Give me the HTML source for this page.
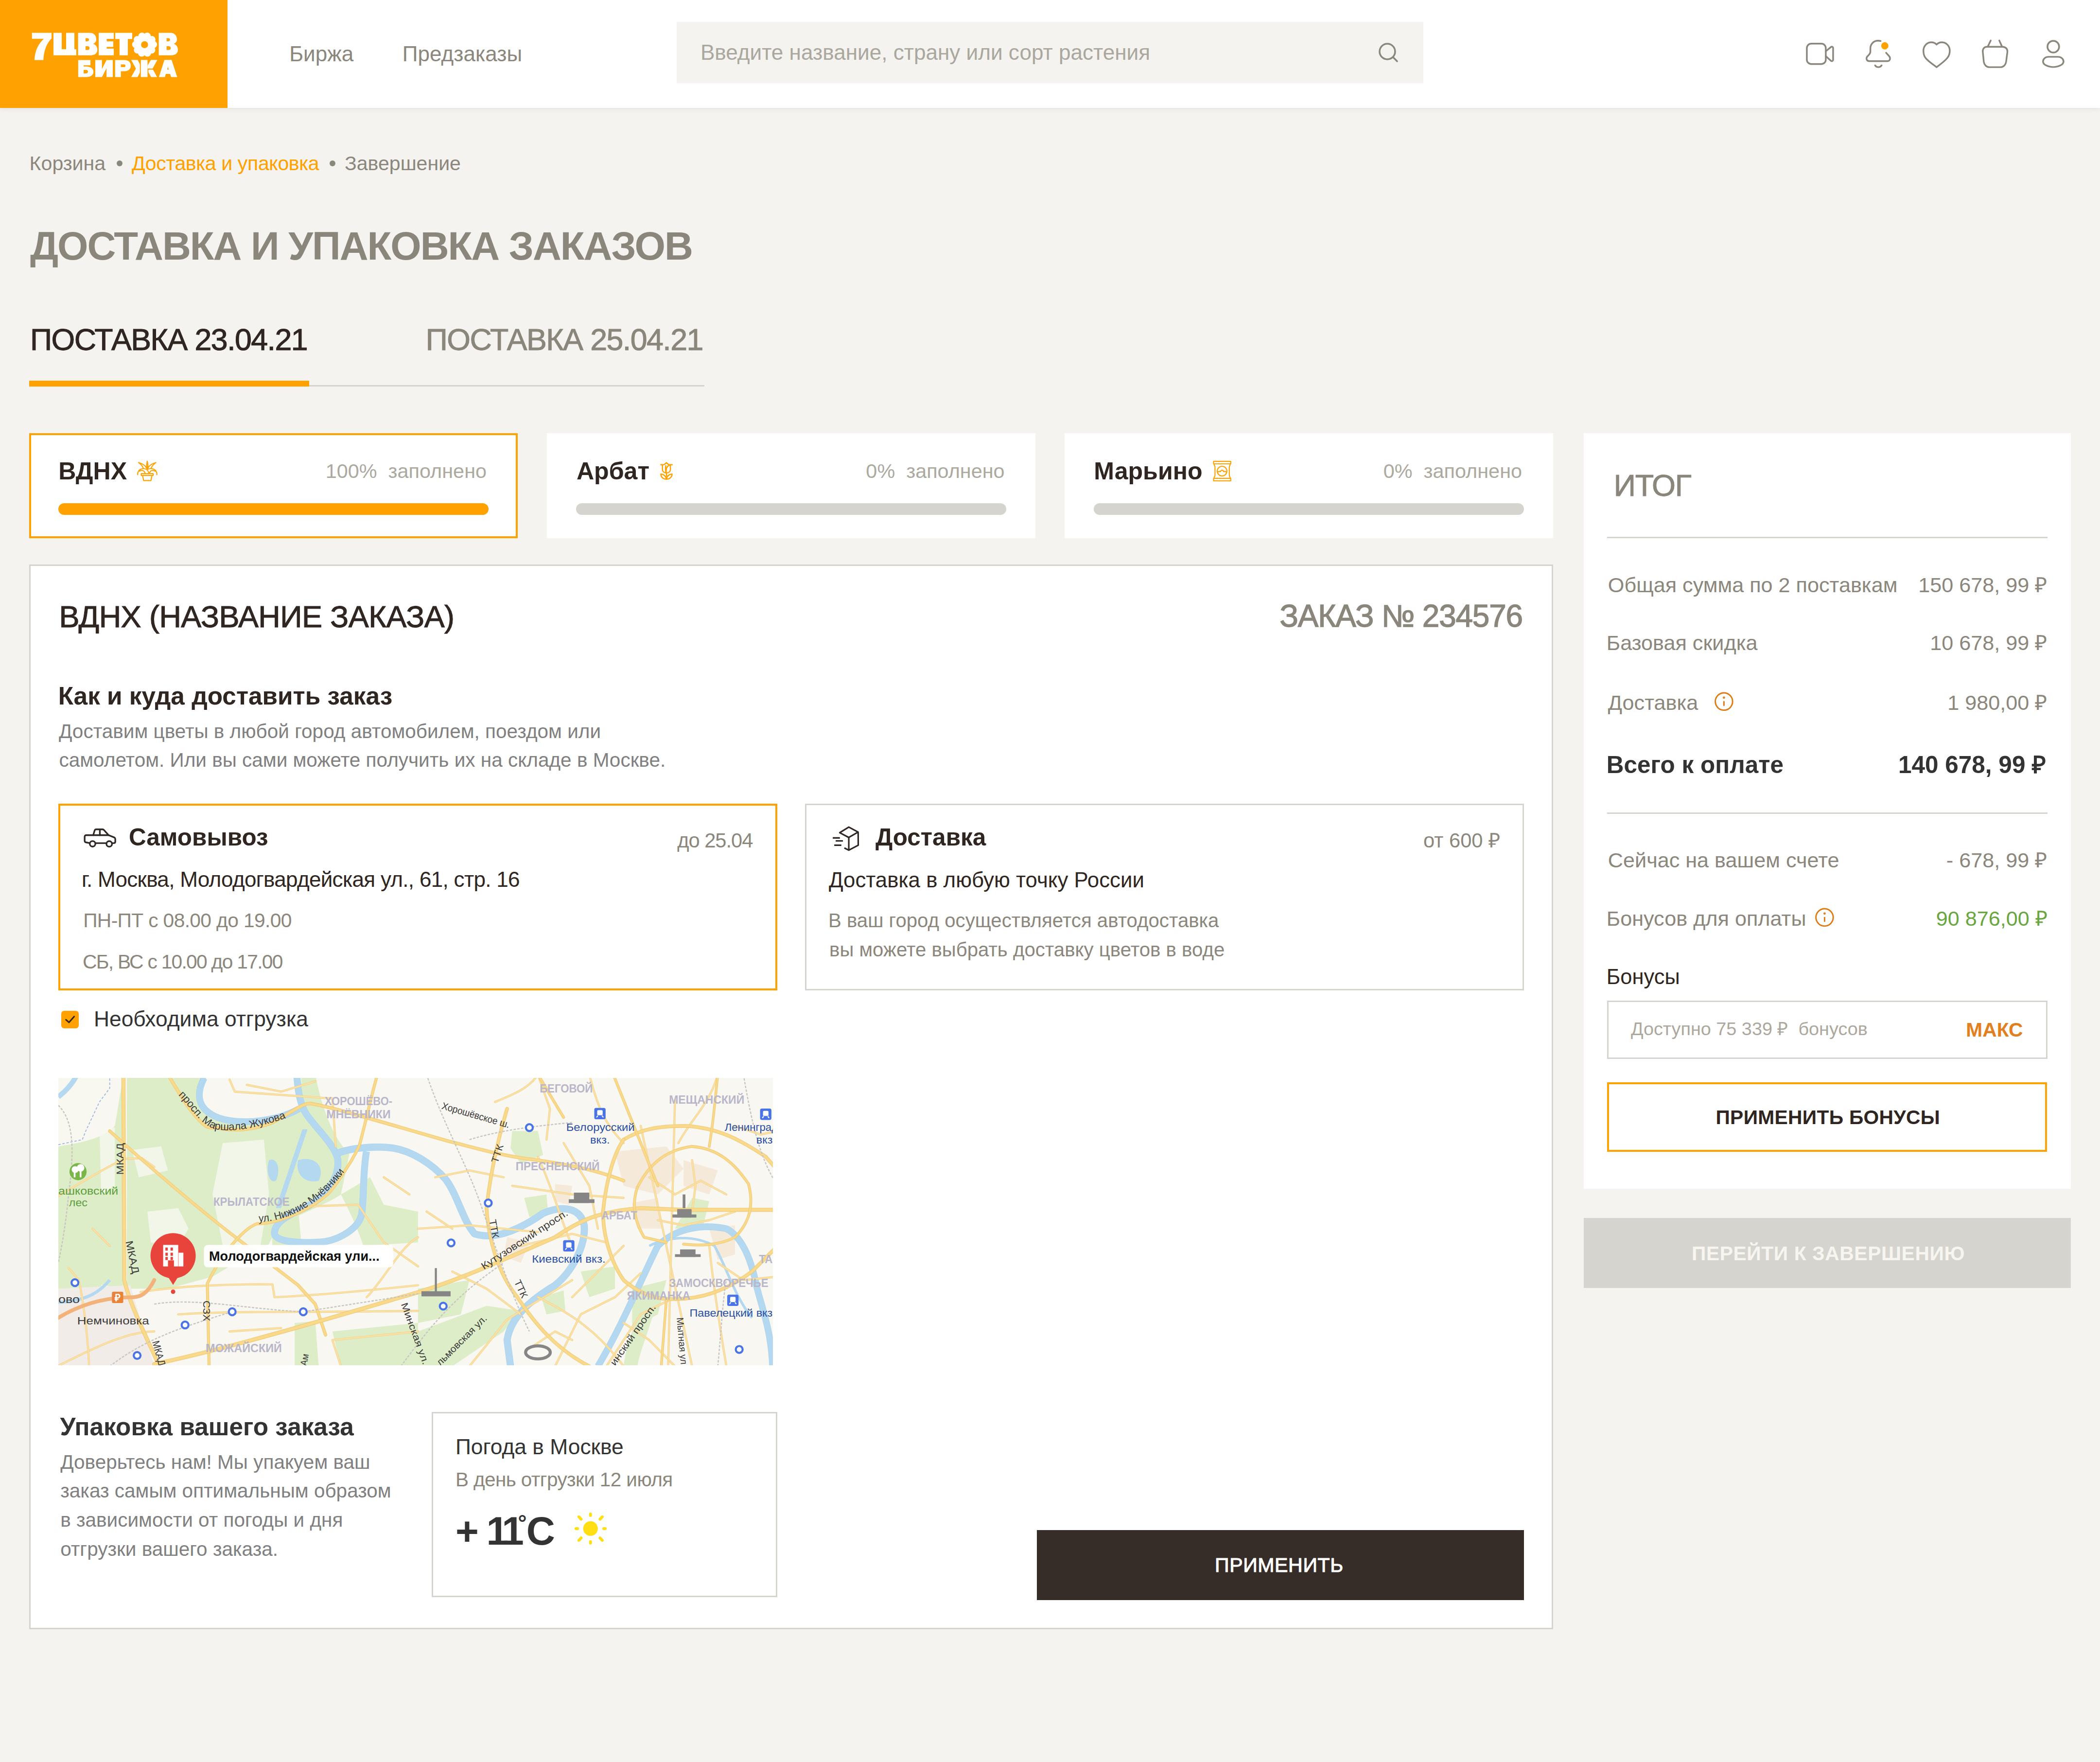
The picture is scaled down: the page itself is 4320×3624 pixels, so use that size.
<!DOCTYPE html>
<html lang="ru">
<head>
<meta charset="utf-8">
<style>
html,body{margin:0;padding:0;width:4320px;height:3624px;overflow:hidden;background:#F4F3EF;}
#pg{position:relative;width:1440px;height:1208px;zoom:3;background:#F4F3EF;font-family:"Liberation Sans",sans-serif;color:#2F2622;overflow:hidden;}
.a{position:absolute;white-space:nowrap;line-height:1;}
@media (max-width:3000px){html,body{width:1440px;height:1208px;} #pg{zoom:1;}}
</style>
</head>
<body>
<div id="pg">

<div class="a" style="left:0;top:0;width:1440px;height:74px;background:#fff;box-shadow:0 1px 3px rgba(120,110,90,0.10);"></div>
<div class="a" style="left:0;top:0;width:156px;height:74px;background:#FFA100;"></div>
<div class="a" style="left:464px;top:15px;width:512px;height:42px;background:#F4F3EF;"></div>
<div class="a" style="left:80px;top:110px;width:4px;height:4px;border-radius:50%;background:#8B877D;"></div>
<div class="a" style="left:226px;top:110px;width:4px;height:4px;border-radius:50%;background:#8B877D;"></div>
<div class="a" style="left:20px;top:264px;width:463px;height:1px;background:#D5D3CE;"></div>
<div class="a" style="left:20px;top:261px;width:192px;height:4px;background:#FFA100;"></div>
<div class="a" style="left:20px;top:297px;width:332.32px;height:69.32px;background:#fff;border:1.34px solid #FFA100;"></div>
<div class="a" style="left:40px;top:345px;width:295px;height:8px;border-radius:4px;background:#FFA100;"></div>
<div class="a" style="left:375px;top:297px;width:335px;height:72px;background:#fff;"></div>
<div class="a" style="left:395px;top:345px;width:295px;height:8px;border-radius:4px;background:#D6D4CF;"></div>
<div class="a" style="left:730px;top:297px;width:335px;height:72px;background:#fff;"></div>
<div class="a" style="left:750px;top:345px;width:295px;height:8px;border-radius:4px;background:#D6D4CF;"></div>
<div class="a" style="left:20px;top:387px;width:1043px;height:728px;background:#fff;border:1px solid #D6D4CF;"></div>
<div class="a" style="left:40px;top:551px;width:490.32px;height:125.32px;border:1.34px solid #FFA100;"></div>
<div class="a" style="left:552px;top:551px;width:491px;height:126px;border:1px solid #D6D4CF;"></div>
<div class="a" style="left:42px;top:693px;width:12px;height:12px;border-radius:2px;background:#FFA100;"></div>
<div class="a" style="left:296px;top:968px;width:235px;height:125px;border:1px solid #D6D4CF;"></div>
<div class="a" style="left:711px;top:1049px;width:334px;height:48px;background:#372D28;"></div>
<div class="a" style="left:1086px;top:297px;width:334px;height:518px;background:#fff;"></div>
<div class="a" style="left:1102px;top:368px;width:302px;height:1px;background:#D6D4CF;"></div>
<div class="a" style="left:1102px;top:557px;width:302px;height:1px;background:#D6D4CF;"></div>
<div class="a" style="left:1102px;top:686px;width:300px;height:38px;border:1px solid #D6D4CF;"></div>
<div class="a" style="left:1102px;top:742px;width:299px;height:45px;border:1.5px solid #FFA100;"></div>
<div class="a" style="left:1086px;top:835px;width:334px;height:48px;background:#D6D4CF;"></div>

<svg class="a" style="left:13.333px;top:13.333px;width:120px;height:46.667px" viewBox="0 0 2100 817"><g fill="#fff" fill-rule="evenodd">
<path d="M150,161 L385,161 L385,228 C322,292 292,380 287,487 L180,487 C185,375 225,295 292,232 L150,232 Z"/>
<path d="M408,161 L507,161 L507,358 L560,358 L560,161 L659,161 L659,358 L682,358 L682,430 L408,430 Z"/>
<path d="M704,161 L845,161 C895,161 922,195 922,240 C922,265 905,285 883,292 C915,300 935,330 935,365 C935,405 905,430 855,430 L704,430 Z M793,225 L793,262 L815,262 C828,262 834,255 834,244 C834,232 828,225 815,225 Z M793,321 L793,366 L818,366 C833,366 841,357 841,344 C841,330 833,321 818,321 Z"/>
<path d="M951,161 L1132,161 L1132,233 L1047,233 L1047,262 L1126,262 L1126,329 L1047,329 L1047,350 L1132,350 L1132,430 L951,430 Z"/>
<path d="M1150,161 L1353,161 L1353,235 L1301,235 L1301,430 L1201,430 L1201,235 L1150,235 Z"/>
<path d="M1672,161 L1812,161 C1862,161 1890,195 1890,240 C1890,265 1873,285 1851,292 C1883,300 1902,330 1902,365 C1902,405 1872,430 1822,430 L1672,430 Z M1766,225 L1766,262 L1788,262 C1801,262 1807,255 1807,244 C1807,232 1801,225 1788,225 Z M1766,321 L1766,366 L1791,366 C1806,366 1816,357 1816,344 C1816,330 1806,321 1791,321 Z"/>
<circle cx="1501.8" cy="302.5" r="112"/><circle cx="1470.8" cy="201.1" r="44"/><circle cx="1532.8" cy="201.1" r="44"/><circle cx="1588.6" cy="241.7" r="44"/><circle cx="1607.8" cy="300.7" r="44"/><circle cx="1586.5" cy="366.3" r="44"/><circle cx="1536.3" cy="402.7" r="44"/><circle cx="1467.3" cy="402.7" r="44"/><circle cx="1417.1" cy="366.3" r="44"/><circle cx="1395.8" cy="300.7" r="44"/><circle cx="1415.0" cy="241.7" r="44"/>
<path d="M705,487 L852,487 L852,550 L770,550 L770,565 L800,565 C860,565 888,595 888,628 C888,665 860,692 800,692 L705,692 Z M770,605 L770,648 L800,648 C815,648 822,637 822,626 C822,615 815,605 800,605 Z"/>
<path d="M910,487 L990,487 L990,595 L1045,487 L1120,487 L1120,692 L1045,692 L1045,585 L990,692 L910,692 Z"/>
<path d="M1148,487 L1262,487 C1312,487 1337,520 1337,553 C1337,590 1312,622 1262,622 L1217,622 L1217,692 L1148,692 Z M1217,540 L1217,572 L1257,572 C1267,572 1272,564 1272,556 C1272,548 1267,540 1257,540 Z"/>
<path d="M1341,486 L1418,486 L1445,535 L1445,639 L1418,691 L1341,691 L1398,590 Z"/>
<path d="M1457,486 L1537,486 L1537,691 L1457,691 Z"/>
<path d="M1537,554 L1577,486 L1655,486 L1598,589 L1537,589 Z"/>
<path d="M1548,602 L1603,602 L1652,691 L1580,691 L1548,633 Z"/>
<path d="M1674,691 L1740,486 L1826,486 L1894,691 L1821,691 L1807,654 L1757,654 L1746,691 Z M1772,601 L1792,601 L1782,569 Z"/>
</g><circle cx="1501.8" cy="302.5" r="42" fill="#FFA100"/></svg>
<svg class="a" style="left:1233.333px;top:23.333px;width:66.667px;height:26.667px" viewBox="0 0 2100 840" fill="none" stroke="#8A867C" stroke-width="36" stroke-linecap="round" stroke-linejoin="round">
<rect x="178" y="208" width="409" height="440" rx="95"/>
<path d="M590,370 L700,280 C720,265 745,280 745,300 L745,560 C745,580 720,595 700,580 L590,480"/>
<path d="M1772,150 C1745,143 1722,143 1700,145 C1612,152 1550,222 1550,310 L1550,380 C1550,410 1537,430 1517,450 L1490,477 C1472,495 1465,515 1467,537 C1472,567 1497,585 1530,585 L1918,585 C1952,585 1975,562 1975,530 C1975,505 1965,485 1945,465 L1890,405"/>
<path d="M1652,677 C1670,703 1695,715 1722,715 C1750,715 1775,703 1793,677"/>
<circle cx="1862" cy="255" r="78" fill="#FFA100" stroke="none"/>
</svg>
<svg class="a" style="left:1313.333px;top:23.333px;width:66.667px;height:26.667px" viewBox="0 0 2100 840" fill="none" stroke="#8A867C" stroke-width="36" stroke-linecap="round" stroke-linejoin="round">
<path d="M460,715 C380,655 285,590 225,520 C185,472 176,425 176,362 C176,255 255,178 350,178 C398,178 432,198 460,225 C488,198 522,178 570,178 C668,178 745,255 745,362 C745,425 730,472 690,520 C632,590 540,655 460,715 Z" stroke-linejoin="miter"/>
<path d="M1545,275 L1885,275 C1950,275 1997,325 1990,385 L1962,600 C1952,665 1905,715 1840,715 L1600,715 C1535,715 1490,665 1480,600 L1458,385 C1450,325 1492,275 1545,275 Z"/>
<path d="M1570,262 L1630,140 M1870,262 L1815,140"/>
</svg>
<svg class="a" style="left:1393.333px;top:23.333px;width:33.333px;height:26.667px" viewBox="0 0 2100 1680" fill="none" stroke="#8A867C" stroke-width="72" stroke-linecap="round" stroke-linejoin="round">
<circle cx="922" cy="545" r="252"/>
<path d="M720,985 L1120,985 C1262,985 1365,1080 1365,1185 C1365,1322 1150,1425 920,1425 C690,1425 478,1322 478,1185 C478,1080 580,985 720,985 Z"/>
</svg>
<svg class="a" style="left:940px;top:23.333px;width:26.667px;height:23.333px" viewBox="0 0 2014 1762" fill="none" stroke="#8A867C" stroke-width="88" stroke-linecap="round">
<circle cx="855" cy="905" r="402"/><path d="M1160,1210 L1360,1412"/>
</svg>
  <!-- location icons -->
  <svg class="a" style="left:90px;top:310px;width:23.333px;height:23.333px" viewBox="0 0 1762 1762" fill="none" stroke="#FFA100" stroke-width="55" stroke-linecap="round" stroke-linejoin="round">
   <rect x="515" y="1110" width="620" height="95" rx="10"/>
   <path d="M590,1215 L640,1470 L1020,1470 L1070,1215"/>
   <path d="M830,470 C790,620 775,740 830,860 C885,740 870,620 830,470 Z"/>
   <path d="M380,540 C600,590 740,700 820,860 M380,540 C520,640 590,740 625,830"/>
   <path d="M1275,540 C1055,590 915,700 840,860 M1275,540 C1135,640 1065,740 1030,830"/>
   <path d="M335,1170 C315,960 470,850 640,850 C760,850 870,930 910,1070 M420,985 C520,920 680,930 710,1080"/>
   <path d="M1325,1170 C1345,960 1190,850 1020,850 C900,850 860,880 850,900 M1240,985 C1140,920 980,930 950,1080"/>
  </svg>
  <svg class="a" style="left:446.667px;top:310px;width:20px;height:23.333px" viewBox="0 0 1510 1762" fill="none" stroke="#FFA100" stroke-width="62" stroke-linecap="round" stroke-linejoin="round">
   <path d="M485,650 L640,650 M915,650 L1075,650"/>
   <path d="M680,630 L778,545 L875,630"/>
   <path d="M572,660 L572,900 C572,1000 652,1070 778,1075 C902,1070 985,1000 985,900 L985,660"/>
   <path d="M745,700 C715,790 735,900 745,1030 M765,1030 C755,830 815,720 925,680"/>
   <path d="M778,1075 L790,1250"/>
   <path d="M490,1135 C485,1290 620,1395 778,1400 C765,1250 650,1145 490,1135 Z"/>
   <path d="M1070,1135 C1075,1290 940,1395 782,1400 C795,1250 910,1145 1070,1135 Z"/>
  </svg>
  <svg class="a" style="left:826.667px;top:310px;width:23.333px;height:23.333px" viewBox="0 0 1762 1762" fill="none" stroke="#FFA100" stroke-width="55" stroke-linecap="round" stroke-linejoin="round">
   <rect x="415" y="475" width="890" height="130" rx="8"/>
   <rect x="415" y="1355" width="890" height="130" rx="8"/>
   <path d="M440,610 C440,680 490,700 490,770 L490,1190 C490,1260 440,1280 440,1350"/>
   <path d="M1280,610 C1280,680 1230,700 1230,770 L1230,1190 C1230,1260 1280,1280 1280,1350"/>
   <circle cx="855" cy="980" r="250"/>
   <path d="M630,1030 C680,995 730,990 770,1010 C795,955 830,935 855,935 C890,935 920,960 940,1010 C985,990 1030,995 1080,1030"/>
  </svg>

  <!-- car / box -->
  <svg class="a" style="left:53.333px;top:563.333px;width:30px;height:23.333px" viewBox="0 0 2100 1633" fill="none" stroke="#2F2723" stroke-width="78" stroke-linecap="round" stroke-linejoin="round">
   <path d="M555,1022 L390,992 C352,982 330,952 330,915 L330,722 C330,680 360,648 402,648 L1482,648 L1762,762 C1790,780 1800,805 1800,842 L1800,962 C1800,1002 1772,1030 1722,1030 L1668,1030"/>
   <path d="M868,1030 L1340,1030"/>
   <circle cx="710" cy="1062" r="133"/><circle cx="1510" cy="1067" r="133"/>
   <path d="M742,648 L810,422 C822,390 850,367 882,367 L1195,367 C1220,367 1238,378 1250,395 L1482,648"/>
   <path d="M1060,367 L1060,648"/>
  </svg>
  <svg class="a" style="left:566.667px;top:563.333px;width:26.667px;height:23.333px" viewBox="0 0 2014 1762" fill="none" stroke="#2F2723" stroke-width="80" stroke-linejoin="round">
   <path d="M1160,278 L690,570 L1160,818 L1642,540 Z"/>
   <path d="M1160,818 L1160,1478"/>
   <path d="M1645,540 L1650,1220 L1160,1478 L930,1360"/>
   <path d="M330,842 L700,842 M482,995 L855,995 M407,1218 L775,1218"/>
  </svg>

  <!-- checkbox tick -->
  <svg class="a" style="left:36.667px;top:688.333px;width:23.333px;height:20px" viewBox="0 0 2056 1762" fill="none" stroke="#2F2723" stroke-width="88" stroke-linecap="round" stroke-linejoin="round">
   <path d="M755,950 L940,1110 L1250,755"/>
  </svg>

  <!-- info icons -->
  <svg class="a" style="left:1173.333px;top:470px;width:16.667px;height:20px" viewBox="0 0 1468 1762" fill="none" stroke="#E07A14" stroke-width="86" stroke-linecap="round">
   <circle cx="775" cy="965" r="522"/><path d="M775,978 L775,1200"/><circle cx="775" cy="730" r="30" stroke-width="80"/>
  </svg>
  <svg class="a" style="left:1242.333px;top:617.93px;width:16.667px;height:20px" viewBox="0 0 1468 1762" fill="none" stroke="#E07A14" stroke-width="86" stroke-linecap="round">
   <circle cx="775" cy="965" r="522"/><path d="M775,978 L775,1200"/><circle cx="775" cy="730" r="30" stroke-width="80"/>
  </svg>

  <!-- sun -->
  <svg class="a" style="left:386.667px;top:1030px;width:33.333px;height:33.333px" viewBox="0 0 1762 1762" fill="#FFDF14" stroke="#FFDF14" stroke-width="105" stroke-linecap="round">
   <circle cx="965" cy="950" r="265" stroke="none"/>
   <path d="M965,422 L965,478 M965,1422 L965,1478 M440,950 L495,950 M1445,950 L1500,950 M545,525 L625,610 M1390,525 L1310,610 M545,1375 L625,1290 M1390,1375 L1310,1290"/>
  </svg>


<svg class="a" style="left:40px;top:739px;width:490px;height:197px" viewBox="120 2217 1470 591" preserveAspectRatio="none">
<rect x="120" y="2217" width="1470" height="591" fill="#F8F7F1"/>
<g transform="translate(120,2210) scale(0.35236)">
<path d="M0,420 C120,400 250,380 330,300 L380,0 L380,1250 C250,1230 120,1200 0,1180 Z" fill="#DCEDC8"/>
<path d="M400,0 L860,0 C830,120 820,200 930,260 C1100,310 1300,280 1410,200 L1420,0 L1500,0 C1560,300 1650,420 1700,460 L1650,700 C1560,760 1400,820 1280,880 L1230,990 C1100,1060 1000,1120 900,1180 L640,1250 L400,1250 Z" fill="#DCEDC8"/>
<path d="M1650,700 C1700,800 1750,900 1780,1000 L2100,980 L2100,800 L1900,760 L1820,600 Z" fill="#DCEDC8"/>
<path d="M1240,800 L1400,780 L1420,1000 L1250,1000 Z" fill="#DCEDC8"/>
<path d="M1380,1450 L1500,1440 L1520,1703 L1380,1703 Z" fill="#DCEDC8"/>
<path d="M1600,1500 L2100,1450 L2100,1703 L1650,1703 Z" fill="#DCEDC8"/>
<path d="M0,1100 L200,1120 L260,1250 L0,1250 Z" fill="#DCEDC8"/>
<path d="M2650,330 L2800,330 L2830,470 L2700,520 L2640,430 Z" fill="#DCEDC8"/>
<path d="M2720,720 L2850,700 L2860,820 L2750,830 Z" fill="#DCEDC8"/>
<path d="M2100,1250 L2400,1200 L2350,1400 L2100,1450 Z" fill="#DCEDC8"/>
<path d="M2100,1500 L2500,1350 L2700,1380 L2600,1500 L2300,1703 L2100,1703 Z" fill="#DCEDC8"/>
<path d="M3050,1150 L3250,1120 L3250,1250 L3100,1300 Z" fill="#DCEDC8"/>
<path d="M3350,1250 L3550,1200 L3500,1400 L3350,1480 Z" fill="#DCEDC8"/>
<path d="M3600,900 L3700,720 L3800,740 L3760,900 Z" fill="#DCEDC8"/>
<path d="M2820,1300 L2950,1260 L2960,1380 L2850,1400 Z" fill="#DCEDC8"/>
<path d="M3500,1300 C3450,1500 3400,1600 3380,1703 L3300,1703 C3320,1550 3380,1400 3450,1300 Z" fill="#DCEDC8"/>
<path d="M0,0 L300,0 L300,80 L240,160 L160,330 L140,380 L0,410 Z" fill="#F8F7F1" opacity="0.8"/>
<path d="M520,800 L700,780 L760,900 L700,1000 L540,980 Z" fill="#F8F7F1" opacity="0.8"/>
<path d="M240,300 L330,310 L330,650 L250,700 Z" fill="#F8F7F1" opacity="0.8"/>
<path d="M960,400 L1200,380 L1230,700 L1180,1000 L960,1000 L900,700 Z" fill="#F8F7F1" opacity="0.8"/>
<path d="M430,440 L600,420 L640,560 L470,600 Z" fill="#F8F7F1" opacity="0.8"/>
<path d="M3250,450 L3550,420 L3650,550 L3500,700 L3300,650 Z" fill="#F4E7D6" opacity="0.9"/>
<path d="M3650,500 L3850,560 L3800,700 L3650,650 Z" fill="#F4E7D6" opacity="0.9"/>
<path d="M3350,750 L3500,720 L3520,900 L3380,900 Z" fill="#F4E7D6" opacity="0.9"/>
<path d="M2620,950 L2750,980 L2700,1100 L2600,1060 Z" fill="#F4E7D6" opacity="0.9"/>
<path d="M3800,900 L3950,880 L3950,1050 L3850,1080 Z" fill="#F4E7D6" opacity="0.9"/>
<path d="M2900,640 L3000,650 L2980,760 L2900,740 Z" fill="#F4E7D6" opacity="0.9"/>
<path d="M0,1250 L420,1230 L560,1703 L0,1703 Z" fill="#F1ECE8"/>
<path d="M851,21 C808,105 800,200 935,253 C1075,300 1290,267 1406,200" fill="none" stroke="#A9D1EE" stroke-width="38.56" stroke-linejoin="round"/>
<path d="M851,21 C808,105 800,200 935,253 C1075,300 1290,267 1406,200" fill="none" stroke="#B3D8F0" stroke-width="34.56" stroke-linejoin="round"/>
<path d="M1392,0 C1399,105 1413,176 1448,232 C1518,330 1610,408 1631,492 C1645,597 1567,703 1462,766 C1356,815 1258,857 1262,930 C1270,975 1400,990 1560,975 C1640,960 1760,900 1772,808 C1785,703 1778,562 1799,450" fill="none" stroke="#A9D1EE" stroke-width="40.0" stroke-linejoin="round"/>
<path d="M1392,0 C1399,105 1413,176 1448,232 C1518,330 1610,408 1631,492 C1645,597 1567,703 1462,766 C1356,815 1258,857 1262,930 C1270,975 1400,990 1560,975 C1640,960 1760,900 1772,808 C1785,703 1778,562 1799,450" fill="none" stroke="#B3D8F0" stroke-width="36.0" stroke-linejoin="round"/>
<path d="M1631,460 C1700,430 1850,415 1954,429 C2060,445 2180,520 2260,610 C2330,700 2360,850 2430,930 C2550,970 2700,900 2830,810 C2950,760 3050,780 3070,880 C3080,1000 3000,1150 2900,1230 C2750,1320 2640,1420 2620,1550 L2640,1703" fill="none" stroke="#A9D1EE" stroke-width="41.44" stroke-linejoin="round"/>
<path d="M1631,460 C1700,430 1850,415 1954,429 C2060,445 2180,520 2260,610 C2330,700 2360,850 2430,930 C2550,970 2700,900 2830,810 C2950,760 3050,780 3070,880 C3080,1000 3000,1150 2900,1230 C2750,1320 2640,1420 2620,1550 L2640,1703" fill="none" stroke="#B3D8F0" stroke-width="37.44" stroke-linejoin="round"/>
<path d="M3150,1703 C3300,1450 3400,1200 3500,1000 C3600,900 3750,870 3900,900 C4000,950 4050,1100 4080,1250 C4120,1400 4160,1500 4170,1703" fill="none" stroke="#A9D1EE" stroke-width="38.56" stroke-linejoin="round"/>
<path d="M3150,1703 C3300,1450 3400,1200 3500,1000 C3600,900 3750,870 3900,900 C4000,950 4050,1100 4080,1250 C4120,1400 4160,1500 4170,1703" fill="none" stroke="#B3D8F0" stroke-width="34.56" stroke-linejoin="round"/>
<path d="M3450,1000 C3550,950 3700,930 3830,1000 C3900,1120 3950,1300 4050,1420" fill="none" stroke="#A9D1EE" stroke-width="14.08" stroke-linejoin="round"/>
<path d="M3450,1000 C3550,950 3700,930 3830,1000 C3900,1120 3950,1300 4050,1420" fill="none" stroke="#B3D8F0" stroke-width="10.08" stroke-linejoin="round"/>
<path d="M860,0 C840,30 830,60 820,80" fill="none" stroke="#A9D1EE" stroke-width="25.599999999999998" stroke-linejoin="round"/>
<path d="M860,0 C840,30 830,60 820,80" fill="none" stroke="#B3D8F0" stroke-width="21.599999999999998" stroke-linejoin="round"/>
<path d="M0,130 C40,100 80,60 110,0" fill="none" stroke="#B3D8F0" stroke-width="30"/>
<path d="M0,410 L140,380 L160,330 L240,160 L300,80 L300,0" fill="none" stroke="#9DB3E0" stroke-width="5" stroke-dasharray="14,10"/>
<path d="M1425,320 L1455,320 L1300,780 L1270,780 Z" fill="#B3D8F0"/>
<path d="M1230,500 C1280,480 1300,560 1270,620 C1230,640 1210,560 1230,500 Z" fill="#B3D8F0"/>
<path d="M1400,500 C1500,470 1560,540 1520,620 C1440,640 1380,580 1400,500 Z" fill="#B3D8F0"/>
<path d="M300,1200 C250,1260 180,1320 0,1330" fill="none" stroke="#B3D8F0" stroke-width="18"/>
<path d="M480,1270 C700,1235 1000,1222 1250,1225 L1262,1300 C1500,1290 1800,1262 2100,1230" fill="none" stroke="#F4D38E" stroke-width="12.379999999999999" stroke-linecap="round" stroke-linejoin="round"/>
<path d="M480,1270 C700,1235 1000,1222 1250,1225 L1262,1300 C1500,1290 1800,1262 2100,1230" fill="none" stroke="#FBE3A8" stroke-width="6.38" stroke-linecap="round" stroke-linejoin="round"/>
<path d="M700,1400 C1000,1380 1300,1390 2100,1380" fill="none" stroke="#F4D38E" stroke-width="12.379999999999999" stroke-linecap="round" stroke-linejoin="round"/>
<path d="M700,1400 C1000,1380 1300,1390 2100,1380" fill="none" stroke="#FBE3A8" stroke-width="6.38" stroke-linecap="round" stroke-linejoin="round"/>
<path d="M0,709 C150,620 300,530 390,492 L488,488 L560,540" fill="none" stroke="#F4D38E" stroke-width="12.379999999999999" stroke-linecap="round" stroke-linejoin="round"/>
<path d="M0,709 C150,620 300,530 390,492 L488,488 L560,540" fill="none" stroke="#FBE3A8" stroke-width="6.38" stroke-linecap="round" stroke-linejoin="round"/>
<path d="M1000,30 L1030,100 L1600,140 L1620,420" fill="none" stroke="#F4D38E" stroke-width="12.379999999999999" stroke-linecap="round" stroke-linejoin="round"/>
<path d="M1000,30 L1030,100 L1600,140 L1620,420" fill="none" stroke="#FBE3A8" stroke-width="6.38" stroke-linecap="round" stroke-linejoin="round"/>
<path d="M1450,770 L1750,760 L1900,980 L2100,1120" fill="none" stroke="#F4D38E" stroke-width="12.379999999999999" stroke-linecap="round" stroke-linejoin="round"/>
<path d="M1450,770 L1750,760 L1900,980 L2100,1120" fill="none" stroke="#FBE3A8" stroke-width="6.38" stroke-linecap="round" stroke-linejoin="round"/>
<path d="M1800,1300 C1900,1200 2000,1000 2100,950" fill="none" stroke="#F4D38E" stroke-width="12.379999999999999" stroke-linecap="round" stroke-linejoin="round"/>
<path d="M1800,1300 C1900,1200 2000,1000 2100,950" fill="none" stroke="#FBE3A8" stroke-width="6.38" stroke-linecap="round" stroke-linejoin="round"/>
<path d="M0,1700 C200,1600 400,1500 560,1500" fill="none" stroke="#F4D38E" stroke-width="12.379999999999999" stroke-linecap="round" stroke-linejoin="round"/>
<path d="M0,1700 C200,1600 400,1500 560,1500" fill="none" stroke="#FBE3A8" stroke-width="6.38" stroke-linecap="round" stroke-linejoin="round"/>
<path d="M2100,900 L2400,880 L2800,920" fill="none" stroke="#F4D38E" stroke-width="12.379999999999999" stroke-linecap="round" stroke-linejoin="round"/>
<path d="M2100,900 L2400,880 L2800,920" fill="none" stroke="#FBE3A8" stroke-width="6.38" stroke-linecap="round" stroke-linejoin="round"/>
<path d="M2400,1703 L2620,1430 L3000,1200" fill="none" stroke="#F4D38E" stroke-width="12.379999999999999" stroke-linecap="round" stroke-linejoin="round"/>
<path d="M2400,1703 L2620,1430 L3000,1200" fill="none" stroke="#FBE3A8" stroke-width="6.38" stroke-linecap="round" stroke-linejoin="round"/>
<path d="M2800,480 C2900,700 2950,900 3000,1000" fill="none" stroke="#F4D38E" stroke-width="12.379999999999999" stroke-linecap="round" stroke-linejoin="round"/>
<path d="M2800,480 C2900,700 2950,900 3000,1000" fill="none" stroke="#FBE3A8" stroke-width="6.38" stroke-linecap="round" stroke-linejoin="round"/>
<path d="M3400,300 L3700,1703" fill="none" stroke="#F4D38E" stroke-width="12.379999999999999" stroke-linecap="round" stroke-linejoin="round"/>
<path d="M3400,300 L3700,1703" fill="none" stroke="#FBE3A8" stroke-width="6.38" stroke-linecap="round" stroke-linejoin="round"/>
<path d="M3600,150 L3560,1703" fill="none" stroke="#F4D38E" stroke-width="12.379999999999999" stroke-linecap="round" stroke-linejoin="round"/>
<path d="M3600,150 L3560,1703" fill="none" stroke="#FBE3A8" stroke-width="6.38" stroke-linecap="round" stroke-linejoin="round"/>
<path d="M3200,1703 L3400,1400 L3600,1300" fill="none" stroke="#F4D38E" stroke-width="12.379999999999999" stroke-linecap="round" stroke-linejoin="round"/>
<path d="M3200,1703 L3400,1400 L3600,1300" fill="none" stroke="#FBE3A8" stroke-width="6.38" stroke-linecap="round" stroke-linejoin="round"/>
<path d="M3900,1703 C3850,1400 3820,1200 3800,1000" fill="none" stroke="#F4D38E" stroke-width="12.379999999999999" stroke-linecap="round" stroke-linejoin="round"/>
<path d="M3900,1703 C3850,1400 3820,1200 3800,1000" fill="none" stroke="#FBE3A8" stroke-width="6.38" stroke-linecap="round" stroke-linejoin="round"/>
<path d="M3620,400 C3700,250 3800,180 3850,0" fill="none" stroke="#F4D38E" stroke-width="12.379999999999999" stroke-linecap="round" stroke-linejoin="round"/>
<path d="M3620,400 C3700,250 3800,180 3850,0" fill="none" stroke="#FBE3A8" stroke-width="6.38" stroke-linecap="round" stroke-linejoin="round"/>
<path d="M3300,1703 C3150,1500 3000,1400 2800,1300" fill="none" stroke="#F4D38E" stroke-width="12.379999999999999" stroke-linecap="round" stroke-linejoin="round"/>
<path d="M3300,1703 C3150,1500 3000,1400 2800,1300" fill="none" stroke="#FBE3A8" stroke-width="6.38" stroke-linecap="round" stroke-linejoin="round"/>
<path d="M1650,1703 L1600,1550 L2100,1500" fill="none" stroke="#F4D38E" stroke-width="12.379999999999999" stroke-linecap="round" stroke-linejoin="round"/>
<path d="M1650,1703 L1600,1550 L2100,1500" fill="none" stroke="#FBE3A8" stroke-width="6.38" stroke-linecap="round" stroke-linejoin="round"/>
<path d="M180,1703 C170,1500 150,1350 120,1200 L60,1130" fill="none" stroke="#F4D38E" stroke-width="12.379999999999999" stroke-linecap="round" stroke-linejoin="round"/>
<path d="M180,1703 C170,1500 150,1350 120,1200 L60,1130" fill="none" stroke="#FBE3A8" stroke-width="6.38" stroke-linecap="round" stroke-linejoin="round"/>
<path d="M2900,1703 L3050,1400 L3250,1300 L3400,1160" fill="none" stroke="#F4D38E" stroke-width="12.379999999999999" stroke-linecap="round" stroke-linejoin="round"/>
<path d="M2900,1703 L3050,1400 L3250,1300 L3400,1160" fill="none" stroke="#FBE3A8" stroke-width="6.38" stroke-linecap="round" stroke-linejoin="round"/>
<path d="M3100,0 C3150,200 3200,300 3300,400" fill="none" stroke="#F4D38E" stroke-width="12.379999999999999" stroke-linecap="round" stroke-linejoin="round"/>
<path d="M3100,0 C3150,200 3200,300 3300,400" fill="none" stroke="#FBE3A8" stroke-width="6.38" stroke-linecap="round" stroke-linejoin="round"/>
<path d="M2800,0 L2870,200 L2850,380" fill="none" stroke="#F4D38E" stroke-width="12.379999999999999" stroke-linecap="round" stroke-linejoin="round"/>
<path d="M2800,0 L2870,200 L2850,380" fill="none" stroke="#FBE3A8" stroke-width="6.38" stroke-linecap="round" stroke-linejoin="round"/>
<path d="M2550,160 C2650,120 2750,80 2800,0" fill="none" stroke="#F4D38E" stroke-width="12.379999999999999" stroke-linecap="round" stroke-linejoin="round"/>
<path d="M2550,160 C2650,120 2750,80 2800,0" fill="none" stroke="#FBE3A8" stroke-width="6.38" stroke-linecap="round" stroke-linejoin="round"/>
<path d="M2650,650 L3000,700 L3300,720" fill="none" stroke="#F4D38E" stroke-width="12.379999999999999" stroke-linecap="round" stroke-linejoin="round"/>
<path d="M2650,650 L3000,700 L3300,720" fill="none" stroke="#FBE3A8" stroke-width="6.38" stroke-linecap="round" stroke-linejoin="round"/>
<path d="M2700,1000 L3000,930 L3200,980" fill="none" stroke="#F4D38E" stroke-width="12.379999999999999" stroke-linecap="round" stroke-linejoin="round"/>
<path d="M2700,1000 L3000,930 L3200,980" fill="none" stroke="#FBE3A8" stroke-width="6.38" stroke-linecap="round" stroke-linejoin="round"/>
<path d="M2950,400 L3100,650 L3150,900" fill="none" stroke="#F4D38E" stroke-width="12.379999999999999" stroke-linecap="round" stroke-linejoin="round"/>
<path d="M2950,400 L3100,650 L3150,900" fill="none" stroke="#FBE3A8" stroke-width="6.38" stroke-linecap="round" stroke-linejoin="round"/>
<path d="M3000,1300 L3150,1150 L3300,1000" fill="none" stroke="#F4D38E" stroke-width="12.379999999999999" stroke-linecap="round" stroke-linejoin="round"/>
<path d="M3000,1300 L3150,1150 L3300,1000" fill="none" stroke="#FBE3A8" stroke-width="6.38" stroke-linecap="round" stroke-linejoin="round"/>
<path d="M3450,600 L3600,700 L3750,620 L3900,700" fill="none" stroke="#F4D38E" stroke-width="12.379999999999999" stroke-linecap="round" stroke-linejoin="round"/>
<path d="M3450,600 L3600,700 L3750,620 L3900,700" fill="none" stroke="#FBE3A8" stroke-width="6.38" stroke-linecap="round" stroke-linejoin="round"/>
<path d="M3500,850 L3650,880 L3800,850 L3950,800" fill="none" stroke="#F4D38E" stroke-width="12.379999999999999" stroke-linecap="round" stroke-linejoin="round"/>
<path d="M3500,850 L3650,880 L3800,850 L3950,800" fill="none" stroke="#FBE3A8" stroke-width="6.38" stroke-linecap="round" stroke-linejoin="round"/>
<path d="M3700,500 L3720,650 L3700,800" fill="none" stroke="#F4D38E" stroke-width="12.379999999999999" stroke-linecap="round" stroke-linejoin="round"/>
<path d="M3700,500 L3720,650 L3700,800" fill="none" stroke="#FBE3A8" stroke-width="6.38" stroke-linecap="round" stroke-linejoin="round"/>
<path d="M3850,1100 L4000,1200 L4200,1180" fill="none" stroke="#F4D38E" stroke-width="12.379999999999999" stroke-linecap="round" stroke-linejoin="round"/>
<path d="M3850,1100 L4000,1200 L4200,1180" fill="none" stroke="#FBE3A8" stroke-width="6.38" stroke-linecap="round" stroke-linejoin="round"/>
<path d="M2300,1150 L2500,1250 L2700,1400" fill="none" stroke="#F4D38E" stroke-width="12.379999999999999" stroke-linecap="round" stroke-linejoin="round"/>
<path d="M2300,1150 L2500,1250 L2700,1400" fill="none" stroke="#FBE3A8" stroke-width="6.38" stroke-linecap="round" stroke-linejoin="round"/>
<path d="M2200,600 L2400,560 L2600,600" fill="none" stroke="#F4D38E" stroke-width="12.379999999999999" stroke-linecap="round" stroke-linejoin="round"/>
<path d="M2200,600 L2400,560 L2600,600" fill="none" stroke="#FBE3A8" stroke-width="6.38" stroke-linecap="round" stroke-linejoin="round"/>
<path d="M2150,800 L2300,900" fill="none" stroke="#F4D38E" stroke-width="12.379999999999999" stroke-linecap="round" stroke-linejoin="round"/>
<path d="M2150,800 L2300,900" fill="none" stroke="#FBE3A8" stroke-width="6.38" stroke-linecap="round" stroke-linejoin="round"/>
<path d="M3950,300 L4100,350 L4200,330" fill="none" stroke="#F4D38E" stroke-width="12.379999999999999" stroke-linecap="round" stroke-linejoin="round"/>
<path d="M3950,300 L4100,350 L4200,330" fill="none" stroke="#FBE3A8" stroke-width="6.38" stroke-linecap="round" stroke-linejoin="round"/>
<path d="M3300,1450 L3450,1550 L3600,1703" fill="none" stroke="#F4D38E" stroke-width="12.379999999999999" stroke-linecap="round" stroke-linejoin="round"/>
<path d="M3300,1450 L3450,1550 L3600,1703" fill="none" stroke="#FBE3A8" stroke-width="6.38" stroke-linecap="round" stroke-linejoin="round"/>
<path d="M2750,1600 L2900,1500 L3000,1550" fill="none" stroke="#F4D38E" stroke-width="12.379999999999999" stroke-linecap="round" stroke-linejoin="round"/>
<path d="M2750,1600 L2900,1500 L3000,1550" fill="none" stroke="#FBE3A8" stroke-width="6.38" stroke-linecap="round" stroke-linejoin="round"/>
<path d="M1100,60 L1300,100 L1500,40" fill="none" stroke="#F4D38E" stroke-width="12.379999999999999" stroke-linecap="round" stroke-linejoin="round"/>
<path d="M1100,60 L1300,100 L1500,40" fill="none" stroke="#FBE3A8" stroke-width="6.38" stroke-linecap="round" stroke-linejoin="round"/>
<path d="M1900,600 L2050,700" fill="none" stroke="#F4D38E" stroke-width="12.379999999999999" stroke-linecap="round" stroke-linejoin="round"/>
<path d="M1900,600 L2050,700" fill="none" stroke="#FBE3A8" stroke-width="6.38" stroke-linecap="round" stroke-linejoin="round"/>
<path d="M1000,1500 L1300,1480" fill="none" stroke="#F4D38E" stroke-width="12.379999999999999" stroke-linecap="round" stroke-linejoin="round"/>
<path d="M1000,1500 L1300,1480" fill="none" stroke="#FBE3A8" stroke-width="6.38" stroke-linecap="round" stroke-linejoin="round"/>
<path d="M200,900 L300,1000" fill="none" stroke="#F4D38E" stroke-width="12.379999999999999" stroke-linecap="round" stroke-linejoin="round"/>
<path d="M200,900 L300,1000" fill="none" stroke="#FBE3A8" stroke-width="6.38" stroke-linecap="round" stroke-linejoin="round"/>
<path d="M380,0 L385,1200 C420,1350 500,1500 590,1703" fill="none" stroke="#F1C970" stroke-width="23.4" stroke-linecap="round" stroke-linejoin="round"/>
<path d="M380,0 L385,1200 C420,1350 500,1500 590,1703" fill="none" stroke="#F9D98C" stroke-width="17.4" stroke-linecap="round" stroke-linejoin="round"/>
<path d="M300,330 C600,600 900,850 1100,1000 L1400,1230 L1500,1340 L1560,1520" fill="none" stroke="#F1C970" stroke-width="18.759999999999998" stroke-linecap="round" stroke-linejoin="round"/>
<path d="M300,330 C600,600 900,850 1100,1000 L1400,1230 L1500,1340 L1560,1520" fill="none" stroke="#F9D98C" stroke-width="12.76" stroke-linecap="round" stroke-linejoin="round"/>
<path d="M640,0 C700,100 780,240 860,300 C880,312 900,312 921,309 C1000,330 1125,330 1250,280 C1357,225 1420,170 1469,169 C1600,190 1849,267 2270,387 C2400,420 2600,480 2800,500 C3000,530 3150,560 3300,620" fill="none" stroke="#F1C970" stroke-width="19.919999999999998" stroke-linecap="round" stroke-linejoin="round"/>
<path d="M640,0 C700,100 780,240 860,300 C880,312 900,312 921,309 C1000,330 1125,330 1250,280 C1357,225 1420,170 1469,169 C1600,190 1849,267 2270,387 C2400,420 2600,480 2800,500 C3000,530 3150,560 3300,620" fill="none" stroke="#F9D98C" stroke-width="13.919999999999998" stroke-linecap="round" stroke-linejoin="round"/>
<path d="M1863,0 C1820,150 1790,300 1757,415 C1720,500 1600,680 1567,703 C1480,780 1300,870 1160,871 C1080,900 950,1050 870,1220 L880,1703" fill="none" stroke="#F1C970" stroke-width="17.6" stroke-linecap="round" stroke-linejoin="round"/>
<path d="M1863,0 C1820,150 1790,300 1757,415 C1720,500 1600,680 1567,703 C1480,780 1300,870 1160,871 C1080,900 950,1050 870,1220 L880,1703" fill="none" stroke="#F9D98C" stroke-width="11.6" stroke-linecap="round" stroke-linejoin="round"/>
<path d="M560,1690 C900,1620 1400,1480 2000,1300 C2300,1220 2600,1080 2900,950 C3050,850 3150,800 3400,780 L3650,790 L4200,790" fill="none" stroke="#F1C970" stroke-width="23.4" stroke-linecap="round" stroke-linejoin="round"/>
<path d="M560,1690 C900,1620 1400,1480 2000,1300 C2300,1220 2600,1080 2900,950 C3050,850 3150,800 3400,780 L3650,790 L4200,790" fill="none" stroke="#F9D98C" stroke-width="17.4" stroke-linecap="round" stroke-linejoin="round"/>
<path d="M2620,200 C2560,400 2520,600 2500,780 C2510,950 2560,1150 2680,1300 C2780,1450 2900,1600 3100,1703" fill="none" stroke="#F1C970" stroke-width="21.08" stroke-linecap="round" stroke-linejoin="round"/>
<path d="M2620,200 C2560,400 2520,600 2500,780 C2510,950 2560,1150 2680,1300 C2780,1450 2900,1600 3100,1703" fill="none" stroke="#F9D98C" stroke-width="15.079999999999998" stroke-linecap="round" stroke-linejoin="round"/>
<path d="M3300,380 C3400,320 3500,300 3660,300 C3850,310 3980,380 4130,480 L4200,560" fill="none" stroke="#F1C970" stroke-width="21.08" stroke-linecap="round" stroke-linejoin="round"/>
<path d="M3300,380 C3400,320 3500,300 3660,300 C3850,310 3980,380 4130,480 L4200,560" fill="none" stroke="#F9D98C" stroke-width="15.079999999999998" stroke-linecap="round" stroke-linejoin="round"/>
<path d="M3300,380 C3250,450 3200,600 3180,800 C3180,950 3230,1100 3300,1200 C3380,1270 3480,1310 3560,1310 C3750,1320 3900,1260 4050,1150 L4200,1000" fill="none" stroke="#F1C970" stroke-width="21.08" stroke-linecap="round" stroke-linejoin="round"/>
<path d="M3300,380 C3250,450 3200,600 3180,800 C3180,950 3230,1100 3300,1200 C3380,1270 3480,1310 3560,1310 C3750,1320 3900,1260 4050,1150 L4200,1000" fill="none" stroke="#F9D98C" stroke-width="15.079999999999998" stroke-linecap="round" stroke-linejoin="round"/>
<path d="M3380,660 C3450,520 3550,440 3700,420 C3850,430 3950,520 4030,640 C4060,760 4040,860 3950,950 C3850,1000 3750,1000 3650,990" fill="none" stroke="#F1C970" stroke-width="16.439999999999998" stroke-linecap="round" stroke-linejoin="round"/>
<path d="M3380,660 C3450,520 3550,440 3700,420 C3850,430 3950,520 4030,640 C4060,760 4040,860 3950,950 C3850,1000 3750,1000 3650,990" fill="none" stroke="#F9D98C" stroke-width="10.44" stroke-linecap="round" stroke-linejoin="round"/>
<path d="M3380,660 C3350,750 3360,850 3420,950 L3550,980" fill="none" stroke="#F1C970" stroke-width="16.439999999999998" stroke-linecap="round" stroke-linejoin="round"/>
<path d="M3380,660 C3350,750 3360,850 3420,950 L3550,980" fill="none" stroke="#F9D98C" stroke-width="10.44" stroke-linecap="round" stroke-linejoin="round"/>
<path d="M3240,0 L3360,300 L3500,650" fill="none" stroke="#F1C970" stroke-width="16.439999999999998" stroke-linecap="round" stroke-linejoin="round"/>
<path d="M3240,0 L3360,300 L3500,650" fill="none" stroke="#F9D98C" stroke-width="10.44" stroke-linecap="round" stroke-linejoin="round"/>
<path d="M2800,0 C2860,100 2900,170 2950,250" fill="none" stroke="#F1C970" stroke-width="16.439999999999998" stroke-linecap="round" stroke-linejoin="round"/>
<path d="M2800,0 C2860,100 2900,170 2950,250" fill="none" stroke="#F9D98C" stroke-width="10.44" stroke-linecap="round" stroke-linejoin="round"/>
<path d="M3850,0 C3830,200 3820,300 3800,420" fill="none" stroke="#F1C970" stroke-width="15.28" stroke-linecap="round" stroke-linejoin="round"/>
<path d="M3850,0 C3830,200 3820,300 3800,420" fill="none" stroke="#F9D98C" stroke-width="9.28" stroke-linecap="round" stroke-linejoin="round"/>
<path d="M3520,1703 L3550,1310" fill="none" stroke="#F1C970" stroke-width="15.28" stroke-linecap="round" stroke-linejoin="round"/>
<path d="M3520,1703 L3550,1310" fill="none" stroke="#F9D98C" stroke-width="9.28" stroke-linecap="round" stroke-linejoin="round"/>
<path d="M0,1420 C150,1330 300,1300 430,1300 C480,1300 520,1280 560,1200" fill="none" stroke="#F2B27A" stroke-width="22" stroke-linecap="round"/>
<path d="M0,180 C80,260 100,400 60,700 C40,900 20,1000 0,1100" fill="none" stroke="#C9C6C2" stroke-width="7" stroke-dasharray="14,8"/>
<path d="M560,1340 C800,1300 1100,1370 1430,1385 L2100,1280" fill="none" stroke="#C9C6C2" stroke-width="7" stroke-dasharray="14,8"/>
<path d="M300,1703 C500,1550 700,1480 1015,1385" fill="none" stroke="#C9C6C2" stroke-width="7" stroke-dasharray="14,8"/>
<path d="M2150,0 C2250,300 2400,550 2480,800 C2550,1000 2650,1300 2750,1500" fill="none" stroke="#C9C6C2" stroke-width="7" stroke-dasharray="14,8"/>
<path d="M2400,380 C2600,320 2800,300 3000,280" fill="none" stroke="#C9C6C2" stroke-width="7" stroke-dasharray="14,8"/>
<path d="M2000,1703 C2150,1500 2300,1300 2600,1100" fill="none" stroke="#C9C6C2" stroke-width="7" stroke-dasharray="14,8"/>
<path d="M4000,0 C4050,300 4100,500 4200,650" fill="none" stroke="#C9C6C2" stroke-width="7" stroke-dasharray="14,8"/>
<path d="M3850,1703 C3870,1500 3880,1300 3900,1200" fill="none" stroke="#C9C6C2" stroke-width="7" stroke-dasharray="14,8"/>
<text x="1555" y="180" font-family="Liberation Sans" font-size="68" font-weight="700" fill="#B9B6CA" textLength="395" lengthAdjust="spacingAndGlyphs" text-anchor="start">ХОРОШЁВО-</text>
<text x="1565" y="255" font-family="Liberation Sans" font-size="68" font-weight="700" fill="#B9B6CA" textLength="375" lengthAdjust="spacingAndGlyphs" text-anchor="start">МНЁВНИКИ</text>
<text x="905" y="765" font-family="Liberation Sans" font-size="68" font-weight="700" fill="#B9B6CA" textLength="445" lengthAdjust="spacingAndGlyphs" text-anchor="start">КРЫЛАТСКОЕ</text>
<text x="860" y="1620" font-family="Liberation Sans" font-size="68" font-weight="700" fill="#B9B6CA" textLength="445" lengthAdjust="spacingAndGlyphs" text-anchor="start">МОЖАЙСКИЙ</text>
<text x="2810" y="105" font-family="Liberation Sans" font-size="68" font-weight="700" fill="#B9B6CA" textLength="310" lengthAdjust="spacingAndGlyphs" text-anchor="start">БЕГОВОЙ</text>
<text x="2670" y="560" font-family="Liberation Sans" font-size="68" font-weight="700" fill="#B9B6CA" textLength="490" lengthAdjust="spacingAndGlyphs" text-anchor="start">ПРЕСНЕНСКИЙ</text>
<text x="3170" y="845" font-family="Liberation Sans" font-size="68" font-weight="700" fill="#B9B6CA" textLength="210" lengthAdjust="spacingAndGlyphs" text-anchor="start">АРБАТ</text>
<text x="3565" y="170" font-family="Liberation Sans" font-size="68" font-weight="700" fill="#B9B6CA" textLength="440" lengthAdjust="spacingAndGlyphs" text-anchor="start">МЕЩАНСКИЙ</text>
<text x="3565" y="1240" font-family="Liberation Sans" font-size="68" font-weight="700" fill="#B9B6CA" textLength="580" lengthAdjust="spacingAndGlyphs" text-anchor="start">ЗАМОСКВОРЕЧЬЕ</text>
<text x="3320" y="1315" font-family="Liberation Sans" font-size="68" font-weight="700" fill="#B9B6CA" textLength="370" lengthAdjust="spacingAndGlyphs" text-anchor="start">ЯКИМАНКА</text>
<text x="4090" y="1100" font-family="Liberation Sans" font-size="68" font-weight="700" fill="#B9B6CA" textLength="80" lengthAdjust="spacingAndGlyphs" text-anchor="start">ТА</text>
<text x="0" y="700" font-family="Liberation Sans" font-size="62" font-weight="400" fill="#5C9E3C" textLength="350" lengthAdjust="spacingAndGlyphs" text-anchor="start">ашковский</text>
<text x="62" y="770" font-family="Liberation Sans" font-size="62" font-weight="400" fill="#5C9E3C" textLength="108" lengthAdjust="spacingAndGlyphs" text-anchor="start">лес</text>
<text x="110" y="1460" font-family="Liberation Sans" font-size="64" font-weight="400" fill="#3B3B3B" textLength="420" lengthAdjust="spacingAndGlyphs" text-anchor="start">Немчиновка</text>
<text x="0" y="1335" font-family="Liberation Sans" font-size="64" font-weight="400" fill="#3B3B3B" textLength="125" lengthAdjust="spacingAndGlyphs" text-anchor="start">ово</text>
<text x="380" y="585" font-family="Liberation Sans" font-size="60" font-weight="400" fill="#3B3B3B" textLength="185" lengthAdjust="spacingAndGlyphs" transform="rotate(-90 380 585)" text-anchor="start">МКАД</text>
<text x="392" y="975" font-family="Liberation Sans" font-size="60" font-weight="400" fill="#3B3B3B" textLength="195" lengthAdjust="spacingAndGlyphs" transform="rotate(78 392 975)" text-anchor="start">МКАД</text>
<text x="548" y="1560" font-family="Liberation Sans" font-size="60" font-weight="400" fill="#3B3B3B" textLength="150" lengthAdjust="spacingAndGlyphs" transform="rotate(75 548 1560)" text-anchor="start">МКАД</text>
<text x="846" y="1320" font-family="Liberation Sans" font-size="56" font-weight="400" fill="#3B3B3B" textLength="120" lengthAdjust="spacingAndGlyphs" transform="rotate(90 846 1320)" text-anchor="start">СЗХ</text>
<path id="mzh" d="M700,120 C780,200 820,290 920,320 C1050,340 1200,300 1370,240" fill="none"/>
<text font-family="Liberation Sans" font-size="62" fill="#3B3B3B"><textPath href="#mzh" textLength="720" lengthAdjust="spacingAndGlyphs">просп. Маршала Жукова</textPath></text>
<path id="nmn" d="M1170,860 C1300,860 1420,800 1500,740 C1580,680 1650,600 1690,540" fill="none"/>
<text font-family="Liberation Sans" font-size="62" fill="#3B3B3B"><textPath href="#nmn" textLength="600" lengthAdjust="spacingAndGlyphs">ул. Нижние Мнёвники</textPath></text>
<text x="2000" y="1340" font-family="Liberation Sans" font-size="56" font-weight="400" fill="#3B3B3B" textLength="380" lengthAdjust="spacingAndGlyphs" transform="rotate(70 2000 1340)" text-anchor="start">Минская ул.</text>
<text x="1450" y="1703" font-family="Liberation Sans" font-size="56" font-weight="400" fill="#3B3B3B" textLength="70" lengthAdjust="spacingAndGlyphs" transform="rotate(-80 1450 1703)" text-anchor="start">Ам</text>
<text x="2965" y="330" font-family="Liberation Sans" font-size="62" font-weight="400" fill="#2B4FA3" textLength="400" lengthAdjust="spacingAndGlyphs" text-anchor="start">Белорусский</text>
<text x="3105" y="402" font-family="Liberation Sans" font-size="62" font-weight="400" fill="#2B4FA3" textLength="115" lengthAdjust="spacingAndGlyphs" text-anchor="start">вкз.</text>
<text x="3890" y="330" font-family="Liberation Sans" font-size="62" font-weight="400" fill="#2B4FA3" textLength="440" lengthAdjust="spacingAndGlyphs" text-anchor="start">Ленинградский</text>
<text x="4075" y="402" font-family="Liberation Sans" font-size="62" font-weight="400" fill="#2B4FA3" textLength="95" lengthAdjust="spacingAndGlyphs" text-anchor="start">вкз</text>
<text x="2765" y="1098" font-family="Liberation Sans" font-size="62" font-weight="400" fill="#2B4FA3" textLength="430" lengthAdjust="spacingAndGlyphs" text-anchor="start">Киевский вкз.</text>
<text x="3685" y="1412" font-family="Liberation Sans" font-size="62" font-weight="400" fill="#2B4FA3" textLength="485" lengthAdjust="spacingAndGlyphs" text-anchor="start">Павелецкий вкз</text>
<text x="2235" y="200" font-family="Liberation Sans" font-size="58" font-weight="400" fill="#3B3B3B" textLength="410" lengthAdjust="spacingAndGlyphs" transform="rotate(16 2235 200)" text-anchor="start">Хорошёвское ш.</text>
<text x="2565" y="520" font-family="Liberation Sans" font-size="58" font-weight="400" fill="#3B3B3B" textLength="110" lengthAdjust="spacingAndGlyphs" transform="rotate(-72 2565 520)" text-anchor="start">ТТК</text>
<text x="2515" y="850" font-family="Liberation Sans" font-size="58" font-weight="400" fill="#3B3B3B" textLength="110" lengthAdjust="spacingAndGlyphs" transform="rotate(80 2515 850)" text-anchor="start">ТТК</text>
<text x="2660" y="1210" font-family="Liberation Sans" font-size="58" font-weight="400" fill="#3B3B3B" textLength="110" lengthAdjust="spacingAndGlyphs" transform="rotate(65 2660 1210)" text-anchor="start">ТТК</text>
<text x="2485" y="1140" font-family="Liberation Sans" font-size="58" font-weight="400" fill="#3B3B3B" textLength="590" lengthAdjust="spacingAndGlyphs" transform="rotate(-33 2485 1140)" text-anchor="start">Кутузовский просп.</text>
<text x="3610" y="1420" font-family="Liberation Sans" font-size="56" font-weight="400" fill="#3B3B3B" textLength="290" lengthAdjust="spacingAndGlyphs" transform="rotate(85 3610 1420)" text-anchor="start">Мытная ул.</text>
<text x="3250" y="1703" font-family="Liberation Sans" font-size="56" font-weight="400" fill="#3B3B3B" textLength="420" lengthAdjust="spacingAndGlyphs" transform="rotate(-55 3250 1703)" text-anchor="start">инский просп.</text>
<text x="2230" y="1703" font-family="Liberation Sans" font-size="56" font-weight="400" fill="#3B3B3B" textLength="390" lengthAdjust="spacingAndGlyphs" transform="rotate(-45 2230 1703)" text-anchor="start">льмовская ул.</text>
<circle cx="97" cy="1215" r="20" fill="#fff" stroke="#4A73E8" stroke-width="12"/>
<circle cx="1015" cy="1385" r="20" fill="#fff" stroke="#4A73E8" stroke-width="12"/>
<circle cx="1430" cy="1385" r="20" fill="#fff" stroke="#4A73E8" stroke-width="12"/>
<circle cx="740" cy="1462" r="20" fill="#fff" stroke="#4A73E8" stroke-width="12"/>
<circle cx="460" cy="1640" r="20" fill="#fff" stroke="#4A73E8" stroke-width="12"/>
<circle cx="2750" cy="310" r="20" fill="#fff" stroke="#4A73E8" stroke-width="12"/>
<circle cx="2510" cy="750" r="20" fill="#fff" stroke="#4A73E8" stroke-width="12"/>
<circle cx="2293" cy="983" r="20" fill="#fff" stroke="#4A73E8" stroke-width="12"/>
<circle cx="2247" cy="1352" r="20" fill="#fff" stroke="#4A73E8" stroke-width="12"/>
<circle cx="3975" cy="1605" r="20" fill="#fff" stroke="#4A73E8" stroke-width="12"/>
<rect x="3129" y="195" width="66" height="66" rx="10" fill="#4A73E8"/>
<rect x="3146" y="208" width="32" height="30" rx="6" fill="#fff"/>
<path d="M3150,240 L3142,250 M3174,240 L3182,250" stroke="#fff" stroke-width="6"/>
<rect x="2947" y="967" width="66" height="66" rx="10" fill="#4A73E8"/>
<rect x="2964" y="980" width="32" height="30" rx="6" fill="#fff"/>
<path d="M2968,1012 L2960,1022 M2992,1012 L3000,1022" stroke="#fff" stroke-width="6"/>
<rect x="4097" y="199" width="66" height="66" rx="10" fill="#4A73E8"/>
<rect x="4114" y="212" width="32" height="30" rx="6" fill="#fff"/>
<path d="M4118,244 L4110,254 M4142,244 L4150,254" stroke="#fff" stroke-width="6"/>
<rect x="3905" y="1285" width="66" height="66" rx="10" fill="#4A73E8"/>
<rect x="3922" y="1298" width="32" height="30" rx="6" fill="#fff"/>
<path d="M3926,1330 L3918,1340 M3950,1330 L3958,1340" stroke="#fff" stroke-width="6"/>
<rect x="2980.0" y="689.5" width="90.0" height="60.50000000000001" fill="#858585" transform="translate(30.0,0)"/>
<rect x="2980.0" y="728.0" width="150" height="22.0" fill="#858585"/>
<rect x="3585.0" y="785.5" width="84.0" height="49.50000000000001" fill="#858585" transform="translate(28.0,0)"/>
<rect x="3585.0" y="817.0" width="140" height="18.0" fill="#858585"/>
<rect x="3600.0" y="1021.0" width="90.0" height="44.0" fill="#858585" transform="translate(30.0,0)"/>
<rect x="3600.0" y="1049.0" width="150" height="16.0" fill="#858585"/>
<rect x="3645" y="700" width="16" height="80" fill="#858585"/>
<ellipse cx="2800" cy="1622" rx="72" ry="38" fill="none" stroke="#858585" stroke-width="18"/>
<rect x="2120" y="1265" width="170" height="30" fill="#858585"/><rect x="2198" y="1130" width="12" height="140" fill="#858585"/>
<circle cx="115" cy="567" r="50" fill="#7AB648"/><path d="M95,600 L95,560 M130,600 L130,555" stroke="#fff" stroke-width="10"/><circle cx="98" cy="555" r="20" fill="#fff"/><circle cx="130" cy="545" r="22" fill="#fff"/>
<rect x="313" y="1268" width="66" height="66" rx="8" fill="#E8833A"/><text x="346" y="1322" font-family="Liberation Sans" font-size="58" font-weight="700" fill="#fff" text-anchor="middle">₽</text>
<rect x="850" y="995" width="1105" height="130" rx="22" fill="#fff" opacity="0.95"/>
<text x="880" y="1087" font-family="Liberation Sans" font-size="80" font-weight="700" fill="#111" textLength="995" lengthAdjust="spacingAndGlyphs" text-anchor="start">Молодогвардейская ули...</text>
<path d="M670,1228 L640,1180 L700,1180 Z" fill="#E8443C"/><circle cx="670" cy="1058" r="132" fill="#E8443C"/>
<path d="M612,1120 L612,995 L700,995 L700,1120 L675,1120 L675,1085 L640,1085 L640,1120 Z M702,1040 L730,1040 L730,1120 L702,1120 Z" fill="#fff"/>
<rect x="625" y="1010" width="14" height="18" fill="#E8443C"/>
<rect x="655" y="1010" width="14" height="18" fill="#E8443C"/>
<rect x="625" y="1040" width="14" height="18" fill="#E8443C"/>
<rect x="655" y="1040" width="14" height="18" fill="#E8443C"/>
<rect x="625" y="1065" width="14" height="18" fill="#E8443C"/>
<rect x="655" y="1065" width="14" height="18" fill="#E8443C"/>
<circle cx="670" cy="1268" r="13" fill="#E8443C"/>
</g></svg>
<div class="a" style="left:198.40px;top:29.53px;font-size:14.7px;color:#8B877D;">Биржа</div>
<div class="a" style="left:275.90px;top:29.53px;font-size:14.7px;color:#8B877D;">Предзаказы</div>
<div class="a" style="left:480.30px;top:28.53px;font-size:14.7px;color:#AAA79E;">Введите название, страну или сорт растения</div>
<div class="a" style="left:20.20px;top:105.43px;font-size:13.7px;color:#8B877D;">Корзина</div>
<div class="a" style="left:90.30px;top:105.43px;font-size:13.7px;color:#FFA100;letter-spacing:-0.13px;">Доставка и упаковка</div>
<div class="a" style="left:236.30px;top:105.43px;font-size:13.7px;color:#8B877D;">Завершение</div>
<div class="a" style="left:20.67px;top:154.91px;font-size:27.2px;color:#8A867C;font-weight:700;letter-spacing:-0.68px;">ДОСТАВКА И УПАКОВКА ЗАКАЗОВ</div>
<div class="a" style="left:20.67px;top:222.24px;font-size:20.9px;color:#2F2622;letter-spacing:-0.52px;-webkit-text-stroke:0.35px #2F2622;">ПОСТАВКА 23.04.21</div>
<div class="a" style="left:291.90px;top:222.24px;font-size:20.9px;color:#8A867C;letter-spacing:-0.52px;-webkit-text-stroke:0.35px #8A867C;">ПОСТАВКА 25.04.21</div>
<div class="a" style="left:40.10px;top:314.73px;font-size:16.7px;color:#2F2622;font-weight:700;">ВДНХ</div>
<div class="a" style="left:223.24px;top:316.35px;font-size:13.8px;color:#ACA99F;">100%&nbsp; заполнено</div>
<div class="a" style="left:395.30px;top:314.73px;font-size:16.7px;color:#2F2622;font-weight:700;">Арбат</div>
<div class="a" style="left:593.79px;top:316.35px;font-size:13.8px;color:#ACA99F;">0%&nbsp; заполнено</div>
<div class="a" style="left:750.10px;top:314.73px;font-size:16.7px;color:#2F2622;font-weight:700;">Марьино</div>
<div class="a" style="left:948.59px;top:316.35px;font-size:13.8px;color:#ACA99F;">0%&nbsp; заполнено</div>
<div class="a" style="left:40.50px;top:412.19px;font-size:21px;color:#2F2622;letter-spacing:-0.19px;-webkit-text-stroke:0.35px #2F2622;">ВДНХ (НАЗВАНИЕ ЗАКАЗА)</div>
<div class="a" style="left:877.49px;top:411.97px;font-size:21.3px;color:#8A867C;letter-spacing:-0.4px;-webkit-text-stroke:0.45px #8A867C;">ЗАКАЗ № 234576</div>
<div class="a" style="left:39.90px;top:468.62px;font-size:17.1px;color:#2F2622;font-weight:700;">Как и куда доставить заказ</div>
<div class="a" style="left:40.33px;top:494.54px;font-size:13.5px;color:#808080;">Доставим цветы в любой город автомобилем, поездом или</div>
<div class="a" style="left:40.50px;top:514.44px;font-size:13.5px;color:#808080;">самолетом. Или вы сами можете получить их на складе в Москве.</div>
<div class="a" style="left:88.30px;top:565.63px;font-size:16.5px;color:#2F2622;font-weight:700;">Самовывоз</div>
<div class="a" style="left:464.43px;top:569.20px;font-size:13.9px;color:#8B877D;letter-spacing:-0.35px;">до 25.04</div>
<div class="a" style="left:55.97px;top:595.69px;font-size:14.7px;color:#2F2622;letter-spacing:-0.24px;">г. Москва, Молодогвардейская ул., 61, стр. 16</div>
<div class="a" style="left:57.07px;top:624.46px;font-size:13.6px;color:#8B877D;letter-spacing:-0.22px;">ПН-ПТ с 08.00 до 19.00</div>
<div class="a" style="left:56.67px;top:652.62px;font-size:13.6px;color:#8B877D;letter-spacing:-0.58px;">СБ, ВС с 10.00 до 17.00</div>
<div class="a" style="left:600.30px;top:565.63px;font-size:16.5px;color:#2F2622;font-weight:700;">Доставка</div>
<div class="a" style="left:976.02px;top:569.20px;font-size:13.9px;color:#8B877D;">от 600 ₽</div>
<div class="a" style="left:568.30px;top:595.84px;font-size:14.6px;color:#2F2622;">Доставка в любую точку России</div>
<div class="a" style="left:568.00px;top:624.56px;font-size:13.4px;color:#8B877D;">В ваш город осуществляется автодоставка</div>
<div class="a" style="left:568.70px;top:644.83px;font-size:13.4px;color:#8B877D;">вы можете выбрать доставку цветов в воде</div>
<div class="a" style="left:64.30px;top:691.47px;font-size:14.8px;color:#333333;">Необходима отгрузка</div>
<div class="a" style="left:41.20px;top:969.75px;font-size:17.1px;color:#333333;font-weight:700;">Упаковка вашего заказа</div>
<div class="a" style="left:41.40px;top:995.50px;font-size:13.5px;color:#808080;">Доверьтесь нам! Мы упакуем ваш</div>
<div class="a" style="left:41.40px;top:1015.47px;font-size:13.5px;color:#808080;">заказ самым оптимальным образом</div>
<div class="a" style="left:41.40px;top:1035.44px;font-size:13.5px;color:#808080;">в зависимости от погоды и дня</div>
<div class="a" style="left:41.40px;top:1055.44px;font-size:13.5px;color:#808080;">отгрузки вашего заказа.</div>
<div class="a" style="left:312.30px;top:984.60px;font-size:14.8px;color:#333333;">Погода в Москве</div>
<div class="a" style="left:312.30px;top:1007.54px;font-size:13.5px;color:#8B877D;letter-spacing:-0.2px;">В день отгрузки 12 июля</div>
<div class="a" style="left:312.30px;top:1035.86px;font-size:27.3px;color:#333333;font-weight:700;">+</div>
<div class="a" style="left:333.50px;top:1035.86px;font-size:27.3px;color:#333333;font-weight:700;">1</div>
<div class="a" style="left:344.10px;top:1035.86px;font-size:27.3px;color:#333333;font-weight:700;">1</div>
<div class="a" style="left:360.90px;top:1035.86px;font-size:27.3px;color:#333333;font-weight:700;">C</div>
<div class="a" style="left:833.00px;top:1066.40px;font-size:13.7px;color:#FFFFFF;letter-spacing:0.2px;-webkit-text-stroke:0.35px #fff;">ПРИМЕНИТЬ</div>
<div class="a" style="left:1106.60px;top:322.19px;font-size:21px;color:#8A867C;letter-spacing:-0.45px;-webkit-text-stroke:0.35px #8A867C;">ИТОГ</div>
<div class="a" style="left:1102.60px;top:393.88px;font-size:14.4px;color:#8B877D;">Общая сумма по 2 поставкам</div>
<div class="a" style="left:1315.38px;top:393.88px;font-size:14.4px;color:#8B877D;">150 678, 99 ₽</div>
<div class="a" style="left:1101.60px;top:433.74px;font-size:14.4px;color:#8B877D;">Базовая скидка</div>
<div class="a" style="left:1323.38px;top:433.74px;font-size:14.4px;color:#8B877D;">10 678, 99 ₽</div>
<div class="a" style="left:1102.60px;top:474.68px;font-size:14.4px;color:#8B877D;">Доставка</div>
<div class="a" style="left:1335.39px;top:474.68px;font-size:14.4px;color:#8B877D;">1 980,00 ₽</div>
<div class="a" style="left:1101.60px;top:515.86px;font-size:16.5px;color:#333333;font-weight:700;">Всего к оплате</div>
<div class="a" style="left:1301.65px;top:515.86px;font-size:16.5px;color:#333333;font-weight:700;">140 678, 99 ₽</div>
<div class="a" style="left:1102.60px;top:582.78px;font-size:14.4px;color:#8B877D;">Сейчас на вашем счете</div>
<div class="a" style="left:1334.60px;top:582.78px;font-size:14.4px;color:#8B877D;">- 678, 99 ₽</div>
<div class="a" style="left:1101.60px;top:622.71px;font-size:14.4px;color:#8B877D;">Бонусов для оплаты</div>
<div class="a" style="left:1327.58px;top:622.71px;font-size:14.4px;color:#6AA640;">90 876,00 ₽</div>
<div class="a" style="left:1101.60px;top:662.66px;font-size:14.5px;color:#2F2622;">Бонусы</div>
<div class="a" style="left:1118.30px;top:699.33px;font-size:12.6px;color:#ACA89E;">Доступно 75 339 ₽&nbsp; бонусов</div>
<div class="a" style="left:1348.10px;top:699.49px;font-size:13.6px;color:#E28020;font-weight:700;">МАКС</div>
<div class="a" style="left:1176.50px;top:759.46px;font-size:13.6px;color:#2F2622;font-weight:700;letter-spacing:0.1px;">ПРИМЕНИТЬ БОНУСЫ</div>
<div class="a" style="left:1160.00px;top:852.52px;font-size:13.6px;color:#F7F5F0;font-weight:700;letter-spacing:0.2px;">ПЕРЕЙТИ К ЗАВЕРШЕНИЮ</div>
<div class="a" style="left:355.2px;top:1036.2px;font-size:15px;font-weight:700;color:#333;">°</div>
</div>
</body>
</html>
